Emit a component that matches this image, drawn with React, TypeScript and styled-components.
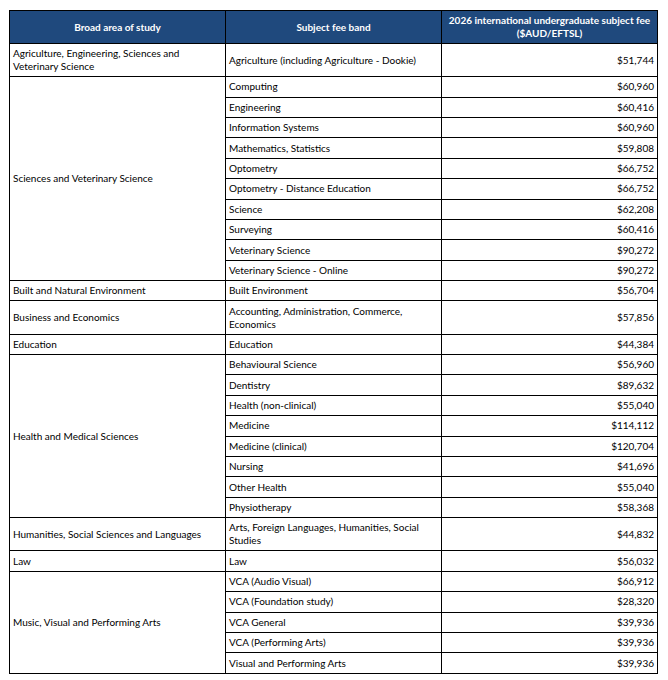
import React from "react";
import styled, { createGlobalStyle } from "styled-components";

const Global = createGlobalStyle`
  html, body { margin: 0; padding: 0; background: #ffffff; }
  body { font-family: Lato, "Liberation Sans", sans-serif; }
`;

const Page = styled.div`
  padding: 10px 11px 0 9px;
`;

const Table = styled.table`
  border-collapse: collapse;
  width: 648px;
  table-layout: fixed;
  font-family: Lato, "Liberation Sans", sans-serif;
  font-size: 10px;
  line-height: 13px;
  color: #000000;
`;

const HeadCell = styled.th`
  background: #1f497d;
  color: #ffffff;
  font-weight: 700;
  text-align: center;
  vertical-align: middle;
  border: 1px solid #000;
  height: 32px;
  padding: 0 3px;
`;

const Row = styled.tr<{ $tall?: boolean }>`
  height: ${(p) => (p.$tall ? "33.2px" : "20.4px")};
`;

const Cell = styled.td<{ $right?: boolean }>`
  border: 1px solid #000;
  padding: 0 3px;
  vertical-align: middle;
  text-align: ${(p) => (p.$right ? "right" : "left")};
`;

type Item = { band: string; fee: string; tall?: boolean };
type Group = { area: string; items: Item[] };

const groups: Group[] = [
  {
    area: "Agriculture, Engineering, Sciences and Veterinary Science",
    items: [{ band: "Agriculture (including Agriculture - Dookie)", fee: "$51,744", tall: true }],
  },
  {
    area: "Sciences and Veterinary Science",
    items: [
      { band: "Computing", fee: "$60,960" },
      { band: "Engineering", fee: "$60,416" },
      { band: "Information Systems", fee: "$60,960" },
      { band: "Mathematics, Statistics", fee: "$59,808" },
      { band: "Optometry", fee: "$66,752" },
      { band: "Optometry - Distance Education", fee: "$66,752" },
      { band: "Science", fee: "$62,208" },
      { band: "Surveying", fee: "$60,416" },
      { band: "Veterinary Science", fee: "$90,272" },
      { band: "Veterinary Science - Online", fee: "$90,272" },
    ],
  },
  { area: "Built and Natural Environment", items: [{ band: "Built Environment", fee: "$56,704" }] },
  {
    area: "Business and Economics",
    items: [{ band: "Accounting, Administration, Commerce, Economics", fee: "$57,856", tall: true }],
  },
  { area: "Education", items: [{ band: "Education", fee: "$44,384" }] },
  {
    area: "Health and Medical Sciences",
    items: [
      { band: "Behavioural Science", fee: "$56,960" },
      { band: "Dentistry", fee: "$89,632" },
      { band: "Health (non-clinical)", fee: "$55,040" },
      { band: "Medicine", fee: "$114,112" },
      { band: "Medicine (clinical)", fee: "$120,704" },
      { band: "Nursing", fee: "$41,696" },
      { band: "Other Health", fee: "$55,040" },
      { band: "Physiotherapy", fee: "$58,368" },
    ],
  },
  {
    area: "Humanities, Social Sciences and Languages",
    items: [{ band: "Arts, Foreign Languages, Humanities, Social Studies", fee: "$44,832", tall: true }],
  },
  { area: "Law", items: [{ band: "Law", fee: "$56,032" }] },
  {
    area: "Music, Visual and Performing Arts",
    items: [
      { band: "VCA (Audio Visual)", fee: "$66,912" },
      { band: "VCA (Foundation study)", fee: "$28,320" },
      { band: "VCA General", fee: "$39,936" },
      { band: "VCA (Performing Arts)", fee: "$39,936" },
      { band: "Visual and Performing Arts", fee: "$39,936" },
    ],
  },
];

export default function App() {
  return (
    <Page>
      <Global />
      <Table>
        <colgroup>
          <col style={{ width: 216 }} />
          <col style={{ width: 216 }} />
          <col style={{ width: 216 }} />
        </colgroup>
        <thead>
          <tr>
            <HeadCell>Broad area of study</HeadCell>
            <HeadCell>Subject fee band</HeadCell>
            <HeadCell>
              2026 international undergraduate subject fee
              <br />
              ($AUD/EFTSL)
            </HeadCell>
          </tr>
        </thead>
        <tbody>
          {groups.map((g) =>
            g.items.map((it, i) => (
              <Row key={g.area + it.band} $tall={it.tall}>
                {i === 0 && <Cell rowSpan={g.items.length}>{g.area}</Cell>}
                <Cell>{it.band}</Cell>
                <Cell $right>{it.fee}</Cell>
              </Row>
            ))
          )}
        </tbody>
      </Table>
    </Page>
  );
}
